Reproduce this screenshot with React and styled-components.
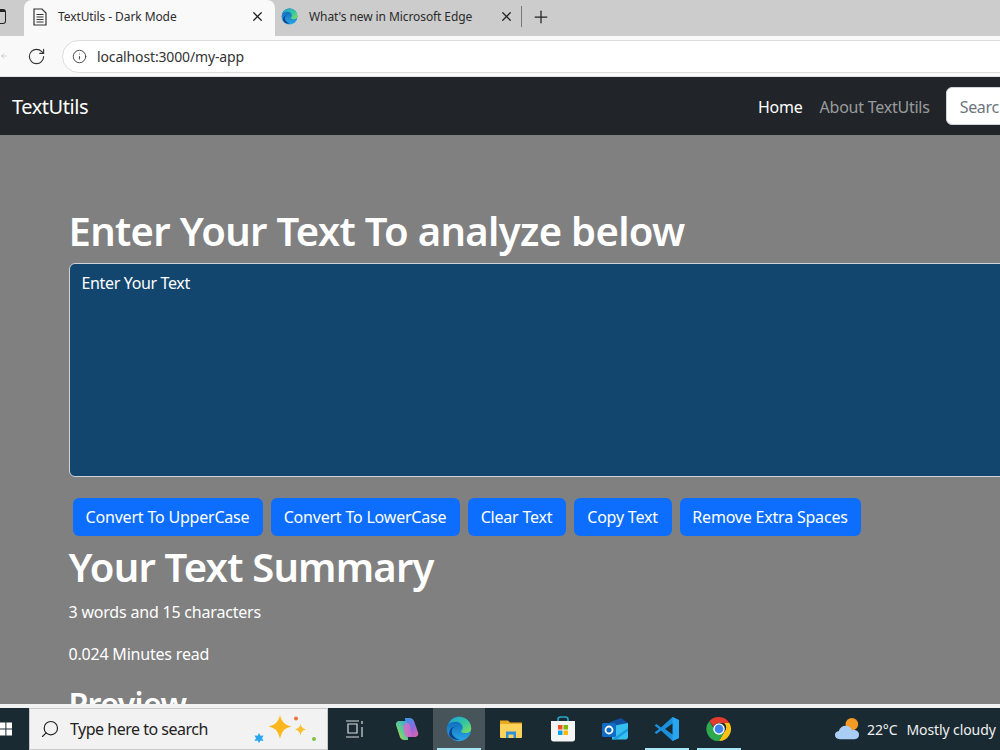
import React from 'react';
import styled, { createGlobalStyle } from 'styled-components';
import { RotateCw, Info, X, Plus, Search, ArrowLeft } from 'lucide-react';

const FONT = `'Noto Sans', 'Open Sans', 'Liberation Sans', sans-serif`;

const GlobalStyle = createGlobalStyle`
  html, body {
    margin: 0;
    padding: 0;
    width: 1000px;
    height: 750px;
    overflow: hidden;
    font-family: ${FONT};
  }
  * { box-sizing: border-box; }
`;

const BUTTONS = [
  { id: 1, title: 'Convert To UpperCase', width: 190 },
  { id: 2, title: 'Convert To LowerCase', width: 189 },
  { id: 3, title: 'Clear Text', width: 98 },
  { id: 4, title: 'Copy Text', width: 98 },
  { id: 5, title: 'Remove Extra Spaces', width: 181 },
];

const EdgeIcon = ({ size }) => (
  <svg width={size} height={size} viewBox="0 0 32 32">
    <defs>
      <linearGradient id="edgeTop" x1="0" y1="0" x2="1" y2="1">
        <stop offset="0" stopColor="#1f9fd8" />
        <stop offset="0.55" stopColor="#35c8a0" />
        <stop offset="1" stopColor="#86dc58" />
      </linearGradient>
      <linearGradient id="edgeLow" x1="0" y1="0" x2="0" y2="1">
        <stop offset="0" stopColor="#0a5fb4" />
        <stop offset="1" stopColor="#2aa8e6" />
      </linearGradient>
    </defs>
    <circle cx="16" cy="16" r="15" fill="url(#edgeLow)" />
    <path d="M2.500 11C5 4 11 1 16 1c9 0 15 7 15 14 0 4-3 6-7 6-3 0-5.500-1-5.500-2 0-1 2-1.500 2-5 0-4-4-7-8-7-5 0-9 1.500-10 4z" fill="url(#edgeTop)" />
    <path d="M13.500 12.500c-4 0-6.500 3-6.500 7 0 4 4 8.500 10 9.500-5.500 1.300-11-1-13-5.500C3.500 17 7 12.500 13.500 12.500z" fill="#0b3f86" />
  </svg>
);

const PageIcon = () => (
  <svg width="14" height="18" viewBox="0 0 14 18" fill="none" stroke="#333" strokeWidth="1.2">
    <path d="M1 1h8l4 4v12H1z" />
    <path d="M3.500 6.500h7M3.500 9h7M3.500 11.500h7M3.500 14h7" />
  </svg>
);

const Sparkles = () => (
  <svg width="66" height="30" viewBox="0 0 66 30">
    <path d="M27 1c1.800 7 4.500 10 11.500 11.500C31.500 14 28.800 17 27 25 25.200 17 22.500 14 15.500 12.500 22.500 11 25.200 8 27 1z" fill="#fbb81e" />
    <path d="M47.500 10c.8 3 1.800 4 5.500 5.500-3.700 1-4.700 2.500-5.500 6-.8-3.500-1.800-5-5.500-6 3.700-1.500 4.700-2.500 5.500-5.500z" fill="#fbc02d" />
    <path d="M6 19l1.500 2.800 3-.4-1.400 2.800 1.400 2.800-3-.6L6 29l-1.400-2.600-3.100.6 1.500-2.800-1.500-2.800 3.100.4z" fill="#2aa5ef" />
    <circle cx="43" cy="4.500" r="2" fill="#f0703a" />
    <circle cx="61" cy="25" r="2" fill="#7cc540" />
  </svg>
);

const TaskViewIcon = () => (
  <svg width="20" height="18" viewBox="0 0 20 18" fill="none" stroke="#d8dcdc" strokeWidth="1.2">
    <path d="M1 1h13M1 17h13M3 4h9v9H3zM17 1v3M17 7v10" />
  </svg>
);

const CopilotIcon = () => (
  <svg width="24" height="24" viewBox="0 0 24 24">
    <defs>
      <linearGradient id="copA" x1="0" y1="0" x2="1" y2="1">
        <stop offset="0" stopColor="#2f9fe8" />
        <stop offset="0.55" stopColor="#8a6ae0" />
        <stop offset="1" stopColor="#f0609c" />
      </linearGradient>
      <linearGradient id="copB" x1="0" y1="1" x2="1" y2="0">
        <stop offset="0" stopColor="#f7c63a" />
        <stop offset="0.45" stopColor="#5fd08a" />
        <stop offset="1" stopColor="#3a9de8" />
      </linearGradient>
    </defs>
    <path d="M10 1h4.500c2.500 0 4 1.200 4.700 3.500L23 15.500c.8 2.800-1 4.500-3.500 4.500H12z" fill="url(#copA)" />
    <path d="M1.200 8.500C.4 5.800 2 4 4.500 4H12l1 19H9.500C7 23 5.500 21.800 4.800 19.500z" fill="url(#copB)" />
    <path d="M10.500 6.500c1.800-.8 3.800-.3 4.300 1.500l1.700 9c.3 1.800-1.500 3-3.500 3-1.800 0-2.800-1-3.200-2.500L8.500 10c-.3-1.500.6-3 2-3.500z" fill="#d86ac8" opacity="0.85" />
  </svg>
);

const FolderIcon = () => (
  <svg width="24" height="20" viewBox="0 0 24 20">
    <path d="M1 1.500h8l2 2h12V6H1z" fill="#e9a820" />
    <rect x="1" y="5" width="22" height="14" rx="1" fill="#fbd25c" />
    <path d="M7 19v-6.500h10V19h-2.500v-3.500h-5V19z" fill="#2f8fd8" />
  </svg>
);

const StoreIcon = () => (
  <svg width="26" height="26" viewBox="0 0 26 26">
    <path d="M8 6V3.500C8 2 9 1 10.500 1h5C17 1 18 2 18 3.500V6" fill="none" stroke="#2aa5c8" strokeWidth="1.600" />
    <path d="M1 5h24v18c0 1.500-1 2.500-2.500 2.500h-19C2 25.500 1 24.500 1 23z" fill="#f5f5f5" />
    <rect x="8" y="9" width="4.500" height="4.500" fill="#f25022" />
    <rect x="13.500" y="9" width="4.500" height="4.500" fill="#7fba00" />
    <rect x="8" y="14.500" width="4.500" height="4.500" fill="#00a4ef" />
    <rect x="13.500" y="14.500" width="4.500" height="4.500" fill="#ffb900" />
  </svg>
);

const OutlookIcon = () => (
  <svg width="26" height="24" viewBox="0 0 26 24">
    <path d="M8 5l11-4 7 5v4H8z" fill="#0f4f9e" />
    <path d="M10 9l16-3v14c0 1.500-1 2.500-2.500 2.500H10z" fill="#35c0f0" />
    <path d="M10 22.500L26 11v3L14 22.500z" fill="#1c9ae0" />
    <rect x="0" y="6" width="14" height="14" rx="1.500" fill="#0f6cc4" />
    <circle cx="7" cy="13" r="3.500" fill="none" stroke="#fff" strokeWidth="1.800" />
  </svg>
);

const VsCodeIcon = () => (
  <svg width="26" height="26" viewBox="0 0 26 26">
    <path d="M18.500 1L25 4v18l-6.500 3L7 14.500 2.500 18 .5 16.500 5 13 .5 9.500 2.500 8 7 11.500z" fill="#1b90dc" />
    <path d="M18.500 1L25 4v18l-6.500 3z" fill="#2aa5ef" />
    <path d="M18.500 7.500L11 13l7.500 5.500z" fill="#1a2a32" />
  </svg>
);

const ChromeIcon = () => (
  <svg width="26" height="26" viewBox="0 0 26 26">
    <path d="M13 1a12 12 0 0 1 10.400 6H13a6 6 0 0 0-5.600 3.800L3.500 5A12 12 0 0 1 13 1z" fill="#e33b2e" />
    <path d="M23.400 7A12 12 0 0 1 13 25l5.200-9a6 6 0 0 0 0-9z" fill="#fbc116" />
    <path d="M3.500 5l5.200 9a6 6 0 0 0 9.500 2L13 25A12 12 0 0 1 3.500 5z" fill="#2da94f" />
    <circle cx="13" cy="13" r="5.800" fill="#fff" />
    <circle cx="13" cy="13" r="4.400" fill="#3f82ee" />
  </svg>
);

const WeatherIcon = () => (
  <svg width="27" height="24" viewBox="0 0 28 24">
    <circle cx="18.500" cy="7" r="6.500" fill="#f59a23" />
    <path d="M6 22.500c-3 0-5-1.800-5-4.300 0-2.300 1.700-3.900 4-4.200C6 10.500 8.600 8.500 12 8.500c3.500 0 6 2 6.800 4.700 3.800-.6 7.200 1 7.200 4.800 0 2.800-2 4.500-4.500 4.500z" fill="#a9cdf5" />
  </svg>
);

const App = () => (
  <Screen>
    <GlobalStyle />
    <TabStrip>
      <WindowGlyph />
      <ActiveTab>
        <PageIcon />
        <TabTitle>TextUtils - Dark Mode</TabTitle>
        <CloseTab><X size={15} strokeWidth={2} /></CloseTab>
      </ActiveTab>
      <Tab>
        <EdgeIcon size={17} />
        <TabTitle>What's new in Microsoft Edge</TabTitle>
        <CloseTab><X size={15} strokeWidth={2} /></CloseTab>
      </Tab>
      <TabDivider />
      <NewTab><Plus size={20} strokeWidth={1.5} /></NewTab>
    </TabStrip>

    <Toolbar>
      <BackButton><ArrowLeft size={20} strokeWidth={1.5} /></BackButton>
      <ReloadButton><RotateCw size={19} strokeWidth={1.4} /></ReloadButton>
      <AddressBar>
        <Info size={15} strokeWidth={1.5} color="#444" />
        <AddressText>localhost:3000/my-app</AddressText>
      </AddressBar>
    </Toolbar>

    <Navbar>
      <Brand>TextUtils</Brand>
      <NavLinks>
        <NavLink $active>Home</NavLink>
        <NavLink>About TextUtils</NavLink>
      </NavLinks>
      <SearchInput placeholder="Search" />
    </Navbar>

    <Main>
      <Heading>Enter Your Text To analyze below</Heading>
      <TextBox>Enter Your Text</TextBox>
      <ButtonRow>
        {BUTTONS.map(item => (
          <ActionButton key={item.id} $width={item.width}>{item.title}</ActionButton>
        ))}
      </ButtonRow>
      <SubHeading>Your Text Summary</SubHeading>
      <Stat>3 words and 15 characters</Stat>
      <Stat>0.024 Minutes read</Stat>
      <PreviewTitle>Preview</PreviewTitle>
    </Main>

    <Taskbar>
      <StartButton>
        <svg width="12" height="16" viewBox="0 0 12 16" fill="#fff">
          <path d="M0 1.500h5.400v6H0zM6.400 1.500H12v6H6.400zM0 8.500h5.400v6H0zM6.400 8.500H12v6H6.400z" />
        </svg>
      </StartButton>
      <SearchBox>
        <SearchGlyph><Search size={20} strokeWidth={1.4} color="#222" /></SearchGlyph>
        <SearchLabel>Type here to search</SearchLabel>
        <Sparkles />
      </SearchBox>
      <TaskIcons>
        <TaskSlot><TaskViewIcon /></TaskSlot>
        <TaskSlot><CopilotIcon /></TaskSlot>
        <TaskSlot $active $running><EdgeIcon size={26} /></TaskSlot>
        <TaskSlot><FolderIcon /></TaskSlot>
        <TaskSlot><StoreIcon /></TaskSlot>
        <TaskSlot><OutlookIcon /></TaskSlot>
        <TaskSlot $running><VsCodeIcon /></TaskSlot>
        <TaskSlot $running><ChromeIcon /></TaskSlot>
      </TaskIcons>
      <WeatherArea>
        <WeatherIcon />
        <WeatherText>22°C</WeatherText>
        <WeatherText>Mostly cloudy</WeatherText>
      </WeatherArea>
    </Taskbar>
  </Screen>
);
export default App;

const Screen = styled.div`
  display: flex;
  flex-direction: column;
  width: 1000px;
  height: 750px;
  overflow: hidden;
  background: #808080;
`;

const TabStrip = styled.div`
  display: flex;
  align-items: flex-end;
  flex: none;
  height: 36px;
  background: #cccccc;
`;

const WindowGlyph = styled.div`
  flex: none;
  align-self: center;
  width: 13px;
  height: 15px;
  margin: -3px 18px 0 -7px;
  border: 1.5px solid #222;
  border-top-width: 3px;
  border-radius: 3px;
`;

const ActiveTab = styled.div`
  display: flex;
  align-items: center;
  flex: none;
  width: 251px;
  height: 36px;
  padding: 0 10px 3px 9px;
  background: #f9f9f9;
  border-radius: 8px 8px 0 0;
  color: #222;
`;

const Tab = styled(ActiveTab)`
  width: 247px;
  padding: 0 8px 3px 6px;
  background: transparent;
`;

const TabTitle = styled.span`
  flex: 1;
  margin-left: 11px;
  font-size: 12px;
  letter-spacing: -0.09px;
  white-space: nowrap;
  color: #2b2b2b;
`;

const CloseTab = styled.span`
  display: flex;
  color: #222;
`;

const TabDivider = styled.div`
  align-self: center;
  flex: none;
  width: 1px;
  height: 21px;
  margin: -3px 0 0 -1px;
  background: #777;
`;

const NewTab = styled.div`
  align-self: center;
  display: flex;
  margin: -3px 0 0 9px;
  color: #222;
`;

const Toolbar = styled.div`
  display: flex;
  align-items: center;
  flex: none;
  height: 41px;
  background: #f9f9f9;
  border-bottom: 1px solid #e4e4e4;
`;

const BackButton = styled.div`
  display: flex;
  flex: none;
  width: 8px;
  justify-content: flex-end;
  overflow: hidden;
  color: #aaa;
`;

const ReloadButton = styled.div`
  display: flex;
  flex: none;
  margin-left: 19px;
  color: #333;
`;

const AddressBar = styled.div`
  display: flex;
  align-items: center;
  flex: none;
  width: 1100px;
  height: 33px;
  margin-left: 16px;
  padding-left: 9px;
  background: #fff;
  border: 1px solid #dcdcdc;
  border-radius: 17px;
`;

const AddressText = styled.span`
  margin-left: 10px;
  font-size: 14px;
  letter-spacing: -0.14px;
  color: #333;
`;

const Navbar = styled.div`
  display: flex;
  align-items: center;
  flex: none;
  height: 58px;
  padding-left: 12px;
  background: #212529;
`;

const Brand = styled.div`
  flex: none;
  width: 746px;
  padding-top: 1px;
  font-size: 20px;
  letter-spacing: -0.45px;
  color: #fff;
`;

const NavLinks = styled.div`
  display: flex;
  flex: none;
  gap: 17px;
  padding-top: 2px;
`;

const NavLink = styled.div`
  font-size: 16px;
  letter-spacing: -0.24px;
  white-space: nowrap;
  color: ${({ $active }) => ($active ? '#fff' : 'rgba(255, 255, 255, 0.55)')};
`;

const SearchInput = styled.input`
  flex: none;
  width: 200px;
  height: 38px;
  margin-left: 16px;
  padding: 2px 13px 0;
  background: #fff;
  border: 1px solid #ced4da;
  border-radius: 6px;
  font-family: ${FONT};
  font-size: 16px;
  letter-spacing: -0.3px;
  &::placeholder { color: #6c757d; opacity: 1; }
`;

const Main = styled.div`
  flex: 1;
  min-height: 0;
  overflow: hidden;
  padding: 71px 0 0 68.500px;
  color: #fff;
`;

const Heading = styled.h1`
  margin: 0;
  height: 57px;
  font-size: 40px;
  font-weight: 600;
  line-height: 50px;
  letter-spacing: -0.67px;
  white-space: nowrap;
`;

const TextBox = styled.div`
  width: 1100px;
  height: 214px;
  padding: 7px 12px;
  background: #13466e;
  border: 1px solid #ced4da;
  border-radius: 6px;
  font-size: 16px;
  line-height: 24px;
  letter-spacing: -0.35px;
`;

const ButtonRow = styled.div`
  display: flex;
  gap: 8px;
  margin: 21px 0 0 4px;
`;

const ActionButton = styled.button`
  flex: none;
  width: ${({ $width }) => $width}px;
  height: 38px;
  padding: 0;
  background: #0d6efd;
  border: none;
  border-radius: 6px;
  font-family: ${FONT};
  font-size: 16px;
  letter-spacing: -0.2px;
  white-space: nowrap;
  color: #fff;
`;

const SubHeading = styled.h2`
  margin: 5px 0 0;
  font-size: 40px;
  font-weight: 600;
  line-height: 52px;
  letter-spacing: -0.8px;
`;

const Stat = styled.p`
  margin: 6px 0 18px;
  font-size: 16px;
  line-height: 24px;
  letter-spacing: -0.2px;

  ${SubHeading} + & {
    margin-top: 7px;
  }
`;

const PreviewTitle = styled.h2`
  margin: -1px 0 0;
  font-size: 32px;
  font-weight: 600;
  line-height: 42px;
  letter-spacing: -0.6px;
`;

const Taskbar = styled.div`
  display: flex;
  align-items: stretch;
  flex: none;
  height: 46px;
  padding-top: 4px;
  background: linear-gradient(#f2f2f2 0 4px, #1a2a32 4px);
`;

const StartButton = styled.div`
  display: flex;
  align-items: center;
  flex: none;
  width: 29px;
`;

const SearchBox = styled.div`
  display: flex;
  align-items: center;
  flex: none;
  width: 299px;
  padding: 0 8px 0 10px;
  background: #f2f2f2;
  border: 1px solid #c8c8c8;
`;

const SearchGlyph = styled.span`
  display: flex;
  transform: scaleX(-1);
`;

const SearchLabel = styled.span`
  flex: 1;
  margin-left: 10px;
  font-size: 16px;
  letter-spacing: -0.5px;
  white-space: nowrap;
  color: #222;
`;

const TaskIcons = styled.div`
  display: flex;
  flex: none;
  margin-left: 1px;
`;

const TaskSlot = styled.div`
  position: relative;
  display: flex;
  align-items: center;
  justify-content: center;
  flex: none;
  width: 52px;
  background: ${({ $active }) => ($active ? '#47555b' : 'transparent')};
  ${({ $running }) => $running && `
    &::after {
      content: '';
      position: absolute;
      left: 4px;
      right: 4px;
      bottom: 0;
      height: 2px;
      background: #a8e6f5;
    }
  `}
`;

const WeatherArea = styled.div`
  display: flex;
  align-items: center;
  gap: 6px;
  margin-left: 89px;
  white-space: nowrap;
`;

const WeatherText = styled.span`
  font-size: 14px;
  letter-spacing: -0.1px;
  margin-right: 3px;
  color: #f0f0f0;
`;
